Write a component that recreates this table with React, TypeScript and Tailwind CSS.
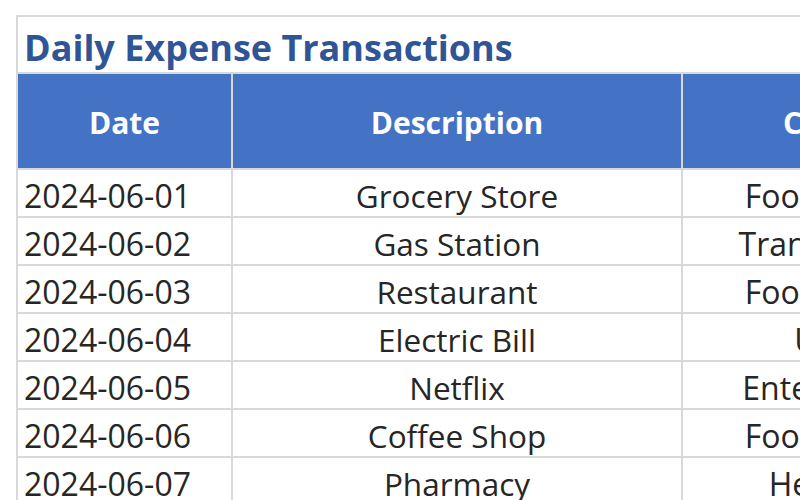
const rows = [
  { date: "2024-06-01", desc: "Grocery Store", cat: "Food & Dining" },
  { date: "2024-06-02", desc: "Gas Station", cat: "Transportation" },
  { date: "2024-06-03", desc: "Restaurant", cat: "Food & Dining" },
  { date: "2024-06-04", desc: "Electric Bill", cat: "Utilities" },
  { date: "2024-06-05", desc: "Netflix", cat: "Entertainment" },
  { date: "2024-06-06", desc: "Coffee Shop", cat: "Food & Dining" },
  { date: "2024-06-07", desc: "Pharmacy", cat: "Healthcare" },
];

export default function App() {
  return (
    <div className="w-[800px] h-[500px] overflow-hidden bg-white font-['Open_Sans',sans-serif]">
      <div className="ml-4 mt-[15px] w-[1100px] border-l-2 border-t-2 border-[#d9d9d9]">
        {/* Title */}
        <div className="h-[57px] border-b-2 border-[#d9d9d9] pl-[6px] pt-[6px] flex items-center">
          <h1 className="text-[36px] font-bold leading-none text-[#2f5597]">Daily Expense Transactions</h1>
        </div>

        {/* Header */}
        <div className="flex h-[96px] bg-[#4472c4] text-white font-bold text-[30px]">
          <div className="w-[215px] border-r-2 border-b-2 border-[#d9d9d9] flex items-center justify-center pt-[3px]">Date</div>
          <div className="w-[450px] border-r-2 border-b-2 border-[#d9d9d9] flex items-center justify-center pt-[3px]">Description</div>
          <div className="w-[336px] border-r-2 border-b-2 border-[#d9d9d9] flex items-center justify-center pt-[3px]">Category</div>
        </div>

        {/* Rows */}
        {rows.map((r) => (
          <div key={r.date} className="flex h-[48px] text-[32px] leading-none text-[#262626]">
            <div className="w-[215px] border-r-2 border-b-2 border-[#d9d9d9] flex items-center pl-[6px] pt-[5px]">{r.date}</div>
            <div className="w-[450px] border-r-2 border-b-2 border-[#d9d9d9] flex items-center justify-center pt-[5px] text-[31.5px]">{r.desc}</div>
            <div className="w-[336px] border-r-2 border-b-2 border-[#d9d9d9] flex items-center justify-center pt-[5px] whitespace-nowrap">{r.cat}</div>
          </div>
        ))}
      </div>
    </div>
  );
}
